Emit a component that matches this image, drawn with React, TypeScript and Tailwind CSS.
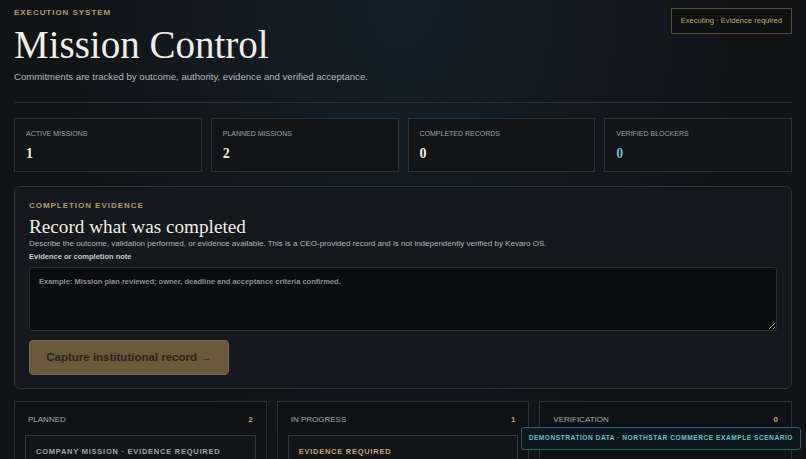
import React from 'react';

const serif = { fontFamily: '"Liberation Serif", "DejaVu Serif", serif' };

const stats = [
  { label: 'Active missions', value: '1', accent: false },
  { label: 'Planned missions', value: '2', accent: false },
  { label: 'Completed records', value: '0', accent: false },
  { label: 'Verified blockers', value: '0', accent: true },
];

const columns = [
  { title: 'Planned', count: 2, active: false, card: 'Company mission · Evidence required', gold: false },
  { title: 'In progress', count: 1, active: true, card: 'Evidence required', gold: true },
  { title: 'Verification', count: 0, active: false, card: '', gold: false },
];

const App: React.FC = () => {
  return (
    <div
      className="min-h-screen bg-[#111417] bg-[radial-gradient(ellipse_at_50%_0%,#13202a_0%,#111417_60%)] text-white px-[14px] pt-[9px] pb-10"
      style={{ fontFamily: '"Liberation Sans", Arial, sans-serif' }}
    >
      {/* Header */}
      <header className="flex items-start justify-between">
        <div>
          <p className="text-[8px] leading-none font-bold uppercase tracking-[0.12em] text-[#b39a6a]">Execution System</p>
          <h1 style={serif} className="text-[39px] leading-none mt-[8px] text-[#f1ede4]">Mission Control</h1>
          <p className="text-[9.6px] leading-none text-[#b3b6b9] mt-[8px]">
            Commitments are tracked by outcome, authority, evidence and verified acceptance.
          </p>
        </div>
        <div className="border border-[#574a30] bg-[#0e1012] px-[9px] py-[8px] -mt-px text-[7.6px] leading-none text-[#c4a56c]">
          Executing · Evidence required
        </div>
      </header>

      <div className="h-px bg-[#2b2f33] mt-[20px]" />

      {/* Stats */}
      <section className="grid grid-cols-4 gap-[9px] mt-[15px]">
        {stats.map((s) => (
          <div key={s.label} className="border border-[#2c3136] bg-[#121518] h-[54px] px-[11px] pt-[11px]">
            <p className="text-[7px] leading-none uppercase text-[#9ca0a4]">{s.label}</p>
            <p
              style={serif}
              className={`text-[14px] leading-none font-bold mt-[10px] ${s.accent ? 'text-[#62b5c4]' : 'text-[#f1ede4]'}`}
            >
              {s.value}
            </p>
          </div>
        ))}
      </section>

      {/* Completion evidence */}
      <section className="mt-[14px] rounded-[6px] border border-[#2e3338] bg-[#15181c] px-[14px] pt-[15px] pb-[13px]">
        <p className="text-[8px] leading-none font-bold uppercase tracking-[0.12em] text-[#b39a6a]">Completion Evidence</p>
        <h2 style={serif} className="text-[19.2px] leading-none mt-[7px] text-[#f1ede4]">Record what was completed</h2>
        <p className="text-[8px] leading-none text-[#b3b6b9] mt-[4px]">
          Describe the outcome, validation performed, or evidence available. This is a CEO-provided record and is not independently verified by Kevaro OS.
        </p>
        <label className="block text-[7.5px] leading-none font-bold text-[#c8cacc] mt-[5px]">Evidence or completion note</label>
        <textarea
          className="mt-[7px] block w-full h-[64px] resize-y rounded-[3px] border border-[#2b2f34] bg-[#0a0c0e] px-[9px] py-[10px] text-[7.5px] leading-none font-bold text-[#c8cacc] placeholder:text-[#8b8f93] outline-none"
          placeholder="Example: Mission plan reviewed; owner, deadline and acceptance criteria confirmed."
        />
        <button className="mt-[9px] h-[35px] w-[200px] rounded-[4px] border border-[#7a6a48] bg-[#6a5a3b] text-[11.5px] font-bold text-[#29241a]">
          Capture institutional record →
        </button>
      </section>

      {/* Board */}
      <section className="grid grid-cols-3 gap-[10px] mt-[12px]">
        {columns.map((c) => (
          <div
            key={c.title}
            className={`border ${c.active ? 'border-[#20363c]' : 'border-[#2a2f33]'} bg-[#0f1214] px-[10px] pt-[14px] h-[120px]`}
          >
            <div className="flex items-center justify-between px-[3px] text-[8px] leading-none">
              <span className="uppercase text-[#a6aaae]">{c.title}</span>
              <span className="font-bold text-[#c4a56c]">{c.count}</span>
            </div>
            {c.card && (
              <div
                className={`mt-[11px] border border-[#363b40] bg-[#121619] px-[10px] pt-[12px] h-[80px] text-[7.5px] leading-none font-bold uppercase tracking-[0.1em] ${c.gold ? 'text-[#c4a56c]' : 'text-[#9fa3a7]'}`}
              >
                {c.card}
              </div>
            )}
          </div>
        ))}
      </section>

      {/* Demo badge */}
      <div className="fixed right-[5px] bottom-[9px] rounded-[3px] border border-[#2c5f6a] bg-[#0d181c] px-[7px] py-[7px] text-[6.6px] leading-none font-bold uppercase tracking-[0.08em] text-[#6cbccb]">
        Demonstration data · Northstar Commerce example scenario
      </div>
    </div>
  );
};

export default App;
